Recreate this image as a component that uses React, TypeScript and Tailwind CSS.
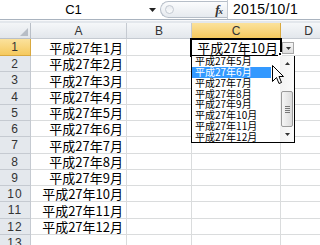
import React from 'react';

const months = ['1', '2', '3', '4', '5', '6', '7', '8', '9', '10', '11', '12'];
const listItems = ['5', '6', '7', '8', '9', '10', '11', '12'];

const jp = { fontFamily: '"Noto Sans CJK JP", "Noto Sans", sans-serif' };

const FormulaBar: React.FC = () => (
  <div className="flex h-[20px] bg-white border-b border-[#a9b3bf]">
    <div className="w-[147px] flex items-center justify-center text-[13px] text-black" style={{ fontFamily: '"Liberation Sans", Arial, sans-serif' }}>
      C1
    </div>
    <div className="w-[11px] flex items-center justify-center">
      <svg width="7" height="4" viewBox="0 0 7 4"><polygon points="0,0 7,0 3.5,4" fill="#222" /></svg>
    </div>
    <div className="w-[2px]" />
    <div className="w-[67px] mt-[1px] mb-[1px] flex items-center rounded-l-full border border-r-0 border-[#b6bec8] bg-gradient-to-b from-[#fbfcfd] to-[#e6eaef]">
      <div className="ml-[4px] w-[9px] h-[9px] rounded-full border border-[#c3c9d1] bg-gradient-to-b from-[#e9ecf0] to-[#fafbfc]" />
      <div className="ml-auto mr-[4px] flex items-end leading-none text-[#333]" style={{ fontFamily: '"Liberation Serif", serif' }}>
        <span className="italic font-bold text-[13px]">f</span>
        <span className="italic font-bold text-[9px] -ml-[1px]">x</span>
      </div>
    </div>
    <div className="flex-1 flex items-center pl-[5px] border-l border-[#c3c9d1] text-[14px] tracking-[0.3px] text-black" style={{ fontFamily: '"Liberation Sans", Arial, sans-serif' }}>
      2015/10/1
    </div>
  </div>
);

const HeaderRow: React.FC = () => (
  <div className="flex h-[16px] text-[12px] text-[#333] leading-none" style={{ fontFamily: '"Liberation Sans", Arial, sans-serif' }}>
    <div className="w-[31px] flex items-end justify-end pr-[2px] pb-[2px] border-r border-b border-[#b9bfc7] bg-gradient-to-b from-[#f3f5f7] to-[#e2e6eb]">
      <svg width="8" height="8" viewBox="0 0 8 8"><polygon points="8,0 8,8 0,8" fill="#b7bdc5" /></svg>
    </div>
    <div className="w-[96px] flex items-center justify-center border-r border-b border-[#c5cad1] bg-gradient-to-b from-[#f5f7f9] to-[#e3e7ec]">A</div>
    <div className="w-[65px] flex items-center justify-center border-r border-b border-[#c5cad1] bg-gradient-to-b from-[#f5f7f9] to-[#e3e7ec]">B</div>
    <div className="w-[89px] flex items-center justify-center border-r border-b border-[#d9a93f] bg-gradient-to-b from-[#fbe29c] to-[#f5c95c]">C</div>
    <div className="flex-1 flex items-center justify-center pl-[16px] border-b border-[#c5cad1] bg-gradient-to-b from-[#f5f7f9] to-[#e3e7ec]">D</div>
  </div>
);

const heights = [17, 16, 17, 16, 16, 16, 17, 16, 16, 16, 17, 16, 16];

const Row: React.FC<{ n: number; h: number }> = ({ n, h }) => {
  const selected = n === 1;
  const value = n <= 12 ? `平成27年${months[n - 1]}月` : '';
  return (
    <div className={h === 17 ? 'flex h-[17px]' : 'flex h-[16px]'}>
      <div
        className={
          selected
            ? 'w-[31px] flex items-center justify-center border-r border-b border-[#d9a93f] bg-gradient-to-b from-[#fbe29c] to-[#f5c95c] text-[12px] tracking-[1px] text-[#333]'
            : 'w-[31px] flex items-center justify-center border-r border-b border-[#c5cad1] bg-[#e4e8ed] text-[12px] tracking-[1px] text-[#333]'
        }
        style={{ fontFamily: '"Liberation Sans", Arial, sans-serif' }}
      >
        {n}
      </div>
      <div className="w-[96px] flex items-center justify-end pr-[3px] border-r border-b border-[#dadcdd] text-[13px] text-black leading-none" style={jp}>
        {value}
      </div>
      <div className="w-[65px] border-r border-b border-[#dadcdd]" />
      <div className="w-[89px] border-r border-b border-[#dadcdd]" />
      <div className="flex-1 border-b border-[#dadcdd]" />
    </div>
  );
};

const DropdownList: React.FC = () => (
  <div className="absolute left-[191px] top-[56px] w-[104px] h-[87px] flex border-l border-r border-b border-black bg-white">
    <div className="w-[79px] flex flex-col">
      {listItems.map((m) => (
        <div
          key={m}
          className={
            m === '6'
              ? 'h-[10.75px] flex items-center pl-[3px] text-[10px] leading-none bg-[#3399ff] text-white'
              : 'h-[10.75px] flex items-center pl-[3px] text-[10px] leading-none text-black'
          }
          style={jp}
        >
          平成27年{m}月
        </div>
      ))}
    </div>
    <div className="flex-1" />
    <div className="w-[14px] flex flex-col items-center bg-gradient-to-r from-[#f2f2f2] to-[#fbfbfb]">
      <div className="h-[12px] flex items-center justify-center pt-[2px]">
        <svg width="5" height="3" viewBox="0 0 5 3"><polygon points="2.5,0 5,3 0,3" fill="#333" /></svg>
      </div>
      <div className="mt-[23px] w-[12px] h-[36px] rounded-[2px] border border-[#9a9a9a] bg-gradient-to-r from-[#f5f5f5] to-[#dcdcdc] flex flex-col items-center justify-center gap-[1px]">
        <div className="w-[5px] h-[1px] bg-[#777]" />
        <div className="w-[5px] h-[1px] bg-[#777]" />
        <div className="w-[5px] h-[1px] bg-[#777]" />
        <div className="w-[5px] h-[1px] bg-[#777]" />
      </div>
      <div className="mt-auto h-[12px] flex items-center justify-center pb-[3px]">
        <svg width="5" height="3" viewBox="0 0 5 3"><polygon points="0,0 5,0 2.5,3" fill="#333" /></svg>
      </div>
    </div>
  </div>
);

export default function App() {
  return (
    <div className="relative w-[320px] h-[245px] overflow-hidden bg-white">
      <FormulaBar />
      <div className="h-[3px] bg-[#e3e7ec] border-t border-[#f7f8fa]" />
      <HeaderRow />
      {heights.map((h, i) => (
        <Row key={i} n={i + 1} h={h} />
      ))}

      {/* selected cell C1 */}
      <div className="absolute left-[190px] top-[38px] w-[92px] h-[19px] border-2 border-black bg-white flex items-center justify-end pr-[2px] text-[13px] leading-none text-black" style={jp}>
        平成27年10月
      </div>
      <div className="absolute left-[278px] top-[52px] w-[4px] h-[4px] bg-black border border-white" />

      {/* dropdown button */}
      <div className="absolute left-[282px] top-[42px] w-[12px] h-[12px] border border-[#a7a7a7] bg-gradient-to-b from-[#f6f6f6] to-[#dedede] flex items-center justify-center">
        <svg width="5" height="3" viewBox="0 0 5 3"><polygon points="0,0 5,0 2.5,3" fill="#333" /></svg>
      </div>

      <DropdownList />

      {/* mouse cursor */}
      <svg className="absolute left-[272px] top-[65px]" width="12" height="20" viewBox="0 0 12 20">
        <polygon points="0.5,0.5 0.5,16.5 4.5,12.5 7,18.5 9.5,17.5 7,11.5 11.5,11.5" fill="#fff" stroke="#000" strokeWidth="1" strokeLinejoin="miter" />
      </svg>
    </div>
  );
}
